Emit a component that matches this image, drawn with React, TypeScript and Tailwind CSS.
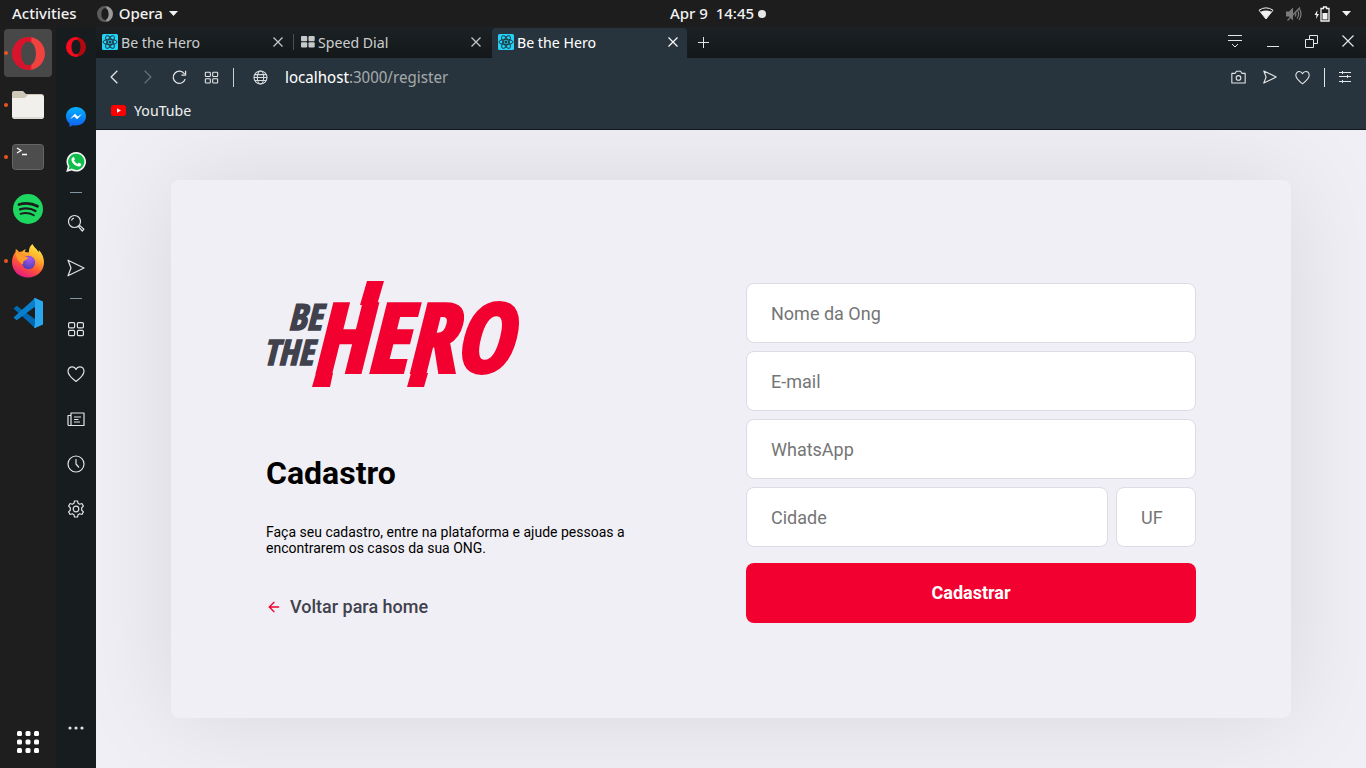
import type { ReactNode } from "react";
import { FiArrowLeft } from "react-icons/fi";

function OperaRing({ size, from, to, id }: { size: number; from: string; to: string; id: string }) {
  return (
    <svg width={size} height={size} viewBox="0 0 32 32" aria-hidden="true">
      <defs>
        <linearGradient id={id} x1="0" y1="0" x2="1" y2="0">
          <stop offset="0" stopColor={from} />
          <stop offset="0.55" stopColor={from} />
          <stop offset="0.62" stopColor={to} />
          <stop offset="1" stopColor={to} />
        </linearGradient>
      </defs>
      <path
        fillRule="evenodd"
        fill={`url(#${id})`}
        d="M16 0a16 16 0 1 0 0 32a16 16 0 1 0 0-32zM16 4.500c4.600 0 7.200 5 7.200 11.500s-2.600 11.500-7.200 11.500s-7.200-5-7.200-11.500s2.600-11.500 7.200-11.500z"
      />
    </svg>
  );
}

function FolderIcon() {
  return (
    <svg width="34" height="32" viewBox="0 0 34 32" aria-hidden="true">
      <path d="M1 4a2 2 0 0 1 2-2h9l3 3h15a3 3 0 0 1 3 3v5H1z" fill="#cfc8b8" />
      <path d="M1 9h13l3-3h13a3 3 0 0 1 3 3v18a3 3 0 0 1-3 3H4a3 3 0 0 1-3-3z" fill="#f1f0ec" />
      <path d="M2 28a3 3 0 0 0 2 2h26a3 3 0 0 0 3-2z" fill="#dedbd3" />
    </svg>
  );
}

function TerminalIcon() {
  return (
    <svg width="32" height="28" viewBox="0 0 32 28" aria-hidden="true">
      <rect x="0.500" y="1.500" width="31" height="25" rx="3" fill="#4d4d4d" stroke="#666" />
      <path d="M5 5l4 2.500l-4 2.500M10 11.500h5" fill="none" stroke="#fff" strokeWidth="1.300" />
    </svg>
  );
}

function SpotifyIcon() {
  return (
    <svg width="30" height="30" viewBox="0 0 30 30" aria-hidden="true">
      <circle cx="15" cy="15" r="15" fill="#1ed760" />
      <g fill="none" stroke="#1b1f1c" strokeLinecap="round">
        <path d="M6 10.500c6-1.800 13-1.300 18.500 1.800" strokeWidth="2.800" />
        <path d="M7 15.300c5-1.500 11-1 15.500 1.700" strokeWidth="2.300" />
        <path d="M7.500 19.800c4.500-1.200 9.500-.800 13.300 1.500" strokeWidth="1.900" />
      </g>
    </svg>
  );
}

function FirefoxIcon() {
  return (
    <svg width="32" height="34" viewBox="0 0 32 34" aria-hidden="true">
      <defs>
        <linearGradient id="ffBody" x1="0.8" y1="0" x2="0.3" y2="1">
          <stop offset="0" stopColor="#fff04a" />
          <stop offset="0.35" stopColor="#ffb02e" />
          <stop offset="0.65" stopColor="#ff5634" />
          <stop offset="1" stopColor="#e31587" />
        </linearGradient>
        <radialGradient id="ffGlobe" cx="0.6" cy="0.25" r="0.8">
          <stop offset="0" stopColor="#a557f2" />
          <stop offset="1" stopColor="#4a3cb0" />
        </radialGradient>
      </defs>
      <path
        d="M20.500 0c1 3 4.500 4.500 6 8.500l.3-2.500c3.500 3.500 5.200 8 5.200 12.500C32 27 25 33.500 16 33.500S0 27 0 18c0-4 1.500-7.500 3.500-10L3.800 5c1.700.8 2.700 2 3.200 3c1-.5 2-.7 3.200-.6c1-1.200 2.300-2 3.600-2.200c-.6 1-.9 1.800-1 2.800l4 .5c0-4 1.500-7 3.700-8.500z"
        fill="url(#ffBody)"
      />
      <circle cx="16.500" cy="18.500" r="6.700" fill="url(#ffGlobe)" />
      <path d="M4 8c3 .2 5.500 1.700 8 4.700c2 .2 4 .2 4.500.8c-.3 1.700-3 2.300-4.500 3.500c-1.200 1-.8 2.500-.8 3.500C7 19 3.500 14 4 8z" fill="#ff9a2b" />
    </svg>
  );
}

function CodeIcon() {
  return (
    <svg width="30" height="30" viewBox="0 0 30 30" aria-hidden="true">
      <path d="M.5 10.500l3.200-2.800L23 22v8l-2-1z" fill="#0069b4" />
      <path d="M.5 19.500l3.200 2.800L23 8V0l-2 1z" fill="#0a80cc" />
      <path d="M22 0l8 3.500v23L22 30l-1-.5l1-3v-23l-1-3z" fill="#29a8f0" />
    </svg>
  );
}

function AppsIcon() {
  return (
    <svg width="22" height="22" viewBox="0 0 22 22" fill="#fff" aria-hidden="true">
      {[0, 8.500, 17].map((x) => [0, 8.500, 17].map((y) => <rect key={`${x}-${y}`} x={x} y={y} width="5" height="5" rx="1.500" />))}
    </svg>
  );
}

function DockButton({ label, running, active, children }: { label: string; running?: boolean; active?: boolean; children: ReactNode }) {
  return (
    <button
      type="button"
      aria-label={label}
      className={`relative flex size-12 items-center justify-center rounded ${active ? "bg-[#484848]" : ""}`}
    >
      {running && <span className="absolute left-0 size-1 rounded-full bg-[#e95420]" />}
      {children}
    </button>
  );
}

function Line({ size = 18, width = 1.2, children }: { size?: number; width?: number; children: ReactNode }) {
  return (
    <svg width={size} height={size} viewBox="0 0 18 18" fill="none" stroke="currentColor" strokeWidth={width} strokeLinejoin="round" aria-hidden="true">
      {children}
    </svg>
  );
}

const heartPath = <path d="M9 16.500C6 14.200 1 10.500 1 6.300C1 3.600 2.900 1.800 5.100 1.800C6.900 1.800 8.300 2.900 9 4.500C9.700 2.900 11.100 1.800 12.900 1.800C15.100 1.800 17 3.600 17 6.300C17 10.500 12 14.200 9 16.500z" />;
const sendPath = <path d="M1 1.200L17 9L1 16.800L4 9z" />;
const gridPath = (
  <>
    <rect x="1.600" y="2.600" width="6" height="5.200" rx="1" />
    <rect x="10.400" y="2.600" width="6" height="5.200" rx="1" />
    <rect x="1.600" y="10.400" width="6" height="5.200" rx="1" />
    <rect x="10.400" y="10.400" width="6" height="5.200" rx="1" />
  </>
);

function MessengerIcon() {
  return (
    <svg width="20" height="20" viewBox="0 0 20 20" aria-hidden="true">
      <defs>
        <linearGradient id="msg" x1="0" y1="0" x2="0" y2="1">
          <stop offset="0" stopColor="#00b2ff" />
          <stop offset="1" stopColor="#1060f0" />
        </linearGradient>
      </defs>
      <path d="M10 0C4.400 0 0 4 0 9.300c0 3 1.300 5.500 3.500 7.200V20l3.300-1.800c1 .3 2 .4 3.200.4c5.600 0 10-4 10-9.300S15.600 0 10 0z" fill="url(#msg)" />
      <path d="M4 12l5-5.200l2.600 2.600L16 7l-5 5.200l-2.600-2.600z" fill="#fff" />
    </svg>
  );
}

function WhatsAppIcon() {
  return (
    <svg width="20" height="20" viewBox="0 0 20 20" aria-hidden="true">
      <path d="M10.200 0a9.800 9.800 0 0 0-8.500 14.600L.2 20l5.500-1.500A9.800 9.800 0 1 0 10.200 0z" fill="#f3f3f3" />
      <path d="M10.200 1.700a8.100 8.100 0 0 0-6.700 12.600l-.9 3.100l3.200-.8A8.100 8.100 0 1 0 10.200 1.700z" fill="#0fbf4a" />
      <path d="M6.800 5.200c.4-.4 1-.4 1.200.1l.8 1.800c.1.300 0 .6-.8 1.500c.8 1.500 2 2.600 3.600 3.300c.8-1 1-1.300 1.400-1.100l1.900.9c.4.200.4.400.2 1.200c-.4 1.100-1.700 1.700-2.800 1.500c-3.500-.7-6.300-3.500-6.800-6.200c-.2-1.200.5-2.300 1.300-3z" fill="#fff" />
    </svg>
  );
}

function SideButton({ label, children }: { label: string; children: ReactNode }) {
  return (
    <button type="button" aria-label={label} className="flex h-[45px] w-10 items-center justify-center text-[#dfe3e5]">
      {children}
    </button>
  );
}

function SideRule() {
  return (
    <div className="flex h-4 items-center">
      <span className="h-px w-3 bg-[#8195a3]" />
    </div>
  );
}

function ReactFavicon() {
  return (
    <svg width="16" height="16" viewBox="0 0 16 16" aria-hidden="true">
      <rect width="16" height="16" rx="1.500" fill="#22d3f7" />
      <g fill="none" stroke="#1f3b47" strokeWidth="1">
        <ellipse cx="8" cy="8" rx="7" ry="2.700" />
        <ellipse cx="8" cy="8" rx="7" ry="2.700" transform="rotate(60 8 8)" />
        <ellipse cx="8" cy="8" rx="7" ry="2.700" transform="rotate(120 8 8)" />
      </g>
      <circle cx="8" cy="8" r="1.500" fill="#1f3b47" />
    </svg>
  );
}

function SpeedDialIcon() {
  return (
    <svg width="14" height="12" viewBox="0 0 14 12" fill="#c6c9ca" aria-hidden="true">
      <rect width="6.200" height="5.200" rx="1" />
      <rect x="7.500" width="6.200" height="5.200" rx="1" />
      <rect y="6.300" width="6.200" height="5.200" rx="1" />
      <rect x="7.500" y="6.300" width="6.200" height="5.200" rx="1" />
    </svg>
  );
}

function Tab({ title, icon, active, divided }: { title: string; icon: ReactNode; active?: boolean; divided?: boolean }) {
  return (
    <div
      role="tab"
      aria-selected={!!active}
      className={`relative flex h-full items-center pb-0.5 pl-1.5 text-[15px] ${active ? "w-[195px] rounded-t bg-[#28343d] pr-1.5 text-white" : "w-[198px] pr-2 text-[#c9cbcc]"}`}
    >
      <span className="mr-[3px] flex shrink-0 items-center">{icon}</span>
      <span className="flex-1 truncate">{title}</span>
      <button type="button" aria-label={`Close ${title}`} className="flex size-4 items-center justify-center">
        <svg width="10" height="10" viewBox="0 0 10 10" stroke="currentColor" strokeWidth="1.200" aria-hidden="true">
          <path d="M.5.5l9 9M9.500.5l-9 9" />
        </svg>
      </button>
      {divided && <span className="absolute right-0 h-4 w-px bg-[#4a4f52]" />}
    </div>
  );
}

function ToolButton({ label, dim, children }: { label: string; dim?: boolean; children: ReactNode }) {
  return (
    <button type="button" aria-label={label} className={`flex h-8 w-8 items-center justify-center ${dim ? "text-[#65717a]" : "text-[#e3e6e8]"}`}>
      {children}
    </button>
  );
}

function HeroLogo() {
  return (
    <svg width="250" height="106" viewBox="0 0 250 106" className="overflow-visible" role="img" aria-label="Be The Hero">
      <g fontFamily='"Open Sans Condensed", "Open Sans", "Liberation Sans", sans-serif' fontWeight="700" fontStyle="italic">
        <g fill="#41414d" stroke="#41414d" strokeWidth="1.500">
          <text x="22" y="49" fontSize="36">BE</text>
          <text x="-3" y="84" fontSize="35">THE</text>
        </g>
        <text x="46" y="91" fontSize="95" fill="#f20030" stroke="#f20030" strokeWidth="4">HERO</text>
        <path d="M94 24L101 0H118L111 24zM50 92H67L64 106H46zM145 92H162L158 106H141z" fill="#f20030" />
      </g>
    </svg>
  );
}

const fieldClass =
  "h-[60px] w-full min-w-0 rounded-lg border border-[#dcdce6] bg-white px-6 text-lg text-[#333] outline-none placeholder:text-[#757575]";

function RegisterPage() {
  return (
    <main className="flex flex-1 items-center justify-center overflow-hidden bg-[#f0eff5] font-['Roboto',sans-serif]">
      <div className="flex w-full max-w-[1120px] items-start justify-between rounded-lg bg-[#f0eff5] px-[95px] pt-[101px] pb-[95px] shadow-[0_0_100px_rgba(0,0,0,0.1)]">
        <section className="w-full max-w-[380px]">
          <HeroLogo />
          <h1 className="mt-[67px] mb-8 text-[32px] leading-[38px] font-bold text-black">Cadastro</h1>
          <p className="text-sm leading-4 text-black">Faça seu cadastro, entre na plataforma e ajude pessoas a encontrarem os casos da sua ONG.</p>
          <a href="#home" className="mt-10 flex items-center gap-2 text-lg leading-[22px] font-medium text-[#41414d]">
            <FiArrowLeft size={16} color="#f20030" />
            Voltar para home
          </a>
        </section>
        <form className="flex w-full max-w-[450px] flex-col gap-2 pt-0.5" onSubmit={(e) => e.preventDefault()}>
          <input aria-label="Nome da Ong" placeholder="Nome da Ong" className={fieldClass} />
          <input aria-label="E-mail" type="email" placeholder="E-mail" className={fieldClass} />
          <input aria-label="WhatsApp" placeholder="WhatsApp" className={fieldClass} />
          <div className="flex gap-2">
            <input aria-label="Cidade" placeholder="Cidade" className={fieldClass} />
            <div className="w-20 shrink-0">
              <input aria-label="UF" placeholder="UF" className={fieldClass} />
            </div>
          </div>
          <button type="submit" className="mt-2 h-[60px] rounded-lg bg-[#f20030] text-lg font-bold text-white">
            Cadastrar
          </button>
        </form>
      </div>
    </main>
  );
}

function SystemBar() {
  return (
    <header className="grid h-[27px] shrink-0 grid-cols-3 items-center bg-[#1d1d1d] px-3 text-[15px] font-medium text-[#f2f2f2]">
      <div className="flex items-center gap-5">
        <button type="button">Activities</button>
        <button type="button" className="flex items-center gap-1.5">
          <OperaRing size={16} from="#5c5c5c" to="#9a9a9a" id="ringTop" />
          Opera
          <svg width="9" height="5" viewBox="0 0 9 5" fill="#f2f2f2" aria-hidden="true"><path d="M0 0h9l-4.500 5z" /></svg>
        </button>
      </div>
      <button type="button" className="flex items-center justify-center gap-1 pl-[70px] whitespace-pre">
        Apr 9  14:45
        <span className="size-2 rounded-full bg-[#e6e6e6]" />
      </button>
      <div className="flex items-center justify-end gap-3 pr-[3px]">
        <svg width="16" height="13" viewBox="0 0 16 13" aria-hidden="true">
          <path d="M1 3.200Q8-1.500 15 3.200L8 12z" fill="none" stroke="#f2f2f2" strokeWidth="1" />
          <path d="M2.500 4.800Q8 2.300 13.500 4.800L8 12z" fill="#f2f2f2" />
        </svg>
        <svg width="16" height="14" viewBox="0 0 16 14" aria-hidden="true">
          <path d="M0 4.500h3l4-4v13l-4-4H0z" fill="#7b7b7b" />
          <path d="M9 4.500q1.800 2.500 0 5M11 2.500q3.300 4.500 0 9M13 1q4 6 0 12M1.500 13.500L14 .5" fill="none" stroke="#7b7b7b" strokeWidth="1.200" />
        </svg>
        <svg width="16" height="16" viewBox="0 0 16 16" aria-hidden="true">
          <path d="M3.500 4L.5 9h2l-.5 4l3-5H3z" fill="#f2f2f2" />
          <path d="M7 2.500h2.500v-1.500h3v1.500H15V15H7z" fill="none" stroke="#f2f2f2" strokeWidth="1.300" />
          <rect x="8.500" y="7" width="5" height="6.500" fill="#f2f2f2" />
        </svg>
        <svg width="9" height="5" viewBox="0 0 9 5" fill="#f2f2f2" aria-hidden="true"><path d="M0 0h9l-4.500 5z" /></svg>
      </div>
    </header>
  );
}

function TabStrip() {
  return (
    <div className="flex h-[31px] shrink-0 items-center bg-linear-to-b from-[#1b2124] to-[#14181b] pt-px" role="tablist">
      <Tab title="Be the Hero" icon={<ReactFavicon />} divided />
      <Tab title="Speed Dial" icon={<span className="pl-px"><SpeedDialIcon /></span>} />
      <Tab title="Be the Hero" icon={<ReactFavicon />} active />
      <button type="button" aria-label="New tab" className="flex size-8 items-center justify-center pb-0.5 text-[#e3e6e8]">
        <svg width="11" height="11" viewBox="0 0 11 11" stroke="currentColor" aria-hidden="true"><path d="M5.500 0v11M0 5.500h11" /></svg>
      </button>
      <div className="ml-auto flex items-center pb-1 text-[#e3e6e8]">
        <button type="button" aria-label="Tab menu" className="flex h-7 w-[38px] items-center justify-center">
          <svg width="14" height="13" viewBox="0 0 14 13" fill="none" stroke="currentColor" aria-hidden="true"><path d="M0 .5h14M0 5.500h14M4 9l3 3l3-3" /></svg>
        </button>
        <button type="button" aria-label="Minimize" className="flex h-7 w-[38px] items-center justify-center">
          <svg width="12" height="12" viewBox="0 0 12 12" stroke="currentColor" aria-hidden="true"><path d="M0 11.500h12" /></svg>
        </button>
        <button type="button" aria-label="Restore" className="flex h-7 w-[38px] items-center justify-center">
          <svg width="13" height="13" viewBox="0 0 13 13" fill="none" stroke="currentColor" aria-hidden="true"><path d="M.5 4.500h8v8h-8zM4.500 4.500v-4h8v8h-4" /></svg>
        </button>
        <button type="button" aria-label="Close window" className="flex h-7 w-9 items-center justify-center">
          <svg width="12" height="12" viewBox="0 0 12 12" stroke="currentColor" strokeWidth="1.200" aria-hidden="true"><path d="M.5.5l11 11M11.500.5l-11 11" /></svg>
        </button>
      </div>
    </div>
  );
}

function AddressBar() {
  return (
    <div className="flex h-[38px] shrink-0 items-center pr-[5px] pl-[3px]">
      <ToolButton label="Back"><Line size={14} width={1.6}><path d="M12 1L4 9l8 8" /></Line></ToolButton>
      <ToolButton label="Forward" dim><Line size={14} width={1.6}><path d="M6 1l8 8l-8 8" /></Line></ToolButton>
      <ToolButton label="Reload">
        <Line size={15} width={1.5}><path d="M15.800 11A7.300 7.300 0 1 1 15 4.800M16.300 1v5h-5" /></Line>
      </ToolButton>
      <ToolButton label="Speed Dial"><Line size={15} width={1.3}>{gridPath}</Line></ToolButton>
      <span className="mx-1.5 h-[19px] w-px bg-[#c9ced1]" />
      <span className="flex w-10 items-center justify-center text-[#d5dadd]">
        <Line size={15} width={1.3}>
          <circle cx="9" cy="9" r="7.800" />
          <ellipse cx="9" cy="9" rx="3.800" ry="7.800" />
          <path d="M2 5.500h14M2 12.500h14M1 9h16" />
        </Line>
      </span>
      <div className="ml-[5px] flex-1 text-base leading-6 text-[#a3a8ab]">
        <span className="text-white">localhost</span>:3000/register
      </div>
      <ToolButton label="Snapshot">
        <Line size={15} width={1.3}><path d="M1 4h4l1.500-2.500h5L13 4h4v11.500H1z" /><circle cx="9" cy="9.500" r="2.800" /></Line>
      </ToolButton>
      <ToolButton label="Send to device"><Line size={14} width={1.4}>{sendPath}</Line></ToolButton>
      <ToolButton label="Add to favourites"><Line size={15} width={1.3}>{heartPath}</Line></ToolButton>
      <span className="ml-1.5 h-[19px] w-px bg-[#e3e6e8]" />
      <span className="ml-1">
        <ToolButton label="Easy setup">
          <svg width="12" height="12" viewBox="0 0 12 12" stroke="currentColor" aria-hidden="true"><path d="M0 1.500h12M0 5.500h12M0 10.500h12M3.500 0v3M8.500 4v3M3.500 9v3" /></svg>
        </ToolButton>
      </span>
    </div>
  );
}

export default function App() {
  return (
    <div className="flex h-screen flex-col overflow-hidden bg-[#1d1d1d] font-['Noto_Sans','Open_Sans',sans-serif]">
      <SystemBar />
      <div className="flex min-h-0 flex-1">
        <nav aria-label="Dock" className="flex w-14 shrink-0 flex-col items-center gap-1 bg-[#1e1e1e] pt-0.5 pb-0.5">
          <DockButton label="Opera" running active><OperaRing size={33} from="#d8142c" to="#f2423f" id="ringDock" /></DockButton>
          <DockButton label="Files" running><FolderIcon /></DockButton>
          <DockButton label="Terminal" running><TerminalIcon /></DockButton>
          <DockButton label="Spotify"><SpotifyIcon /></DockButton>
          <DockButton label="Firefox" running><FirefoxIcon /></DockButton>
          <DockButton label="Visual Studio Code"><CodeIcon /></DockButton>
          <div className="mt-auto"><DockButton label="Show applications"><AppsIcon /></DockButton></div>
        </nav>
        <nav aria-label="Sidebar" className="flex w-10 shrink-0 flex-col items-center bg-[#171c1f] pb-[18px]">
          <button type="button" aria-label="Opera menu" className="mb-[27px] flex h-10 w-10 items-center justify-center">
            <OperaRing size={20} from="#fa0a1e" to="#b5070f" id="ringSide" />
          </button>
          <SideButton label="Messenger"><MessengerIcon /></SideButton>
          <SideButton label="WhatsApp"><WhatsAppIcon /></SideButton>
          <SideRule />
          <SideButton label="Search">
            <Line><circle cx="7.500" cy="7.500" r="6" /><path d="M4.500 6.500a3.200 3.200 0 0 1 2.500-2.300" /><path d="M11.700 12.800l1.200-1.200l4 3.600l-1.600 1.800z" /></Line>
          </SideButton>
          <SideButton label="My Flow"><Line>{sendPath}</Line></SideButton>
          <SideRule />
          <SideButton label="Speed Dial"><Line>{gridPath}</Line></SideButton>
          <SideButton label="Bookmarks"><Line>{heartPath}</Line></SideButton>
          <SideButton label="News">
            <Line><path d="M4 15.500V3h13v12.500H2a1 1 0 0 1-1-1V5.500h3" /><path d="M7 7h7M7 9.500h4.500M7 12h6" /></Line>
          </SideButton>
          <SideButton label="History"><Line><circle cx="9" cy="9" r="8" /><path d="M9 4v5l3 3.500" /></Line></SideButton>
          <SideButton label="Settings">
            <Line>
              <path d="M7.500 1h3l.5 2.200l1.700 1l2.200-.7l1.500 2.600l-1.700 1.600v2.600l1.700 1.600l-1.500 2.600l-2.200-.7l-1.700 1l-.5 2.200h-3L7 14.800l-1.700-1l-2.200.7l-1.500-2.600l1.700-1.600V7.700L1.600 6.100l1.500-2.600l2.200.7l1.700-1z" />
              <circle cx="9" cy="9" r="2.800" />
            </Line>
          </SideButton>
          <div className="mt-auto">
            <SideButton label="More">
              <svg width="16" height="4" viewBox="0 0 16 4" fill="currentColor" aria-hidden="true"><circle cx="2" cy="2" r="1.600" /><circle cx="8" cy="2" r="1.600" /><circle cx="14" cy="2" r="1.600" /></svg>
            </SideButton>
          </div>
        </nav>
        <div className="flex min-w-0 flex-1 flex-col bg-[#28343d] font-['Noto_Sans_Display','Noto_Sans',sans-serif]">
          <TabStrip />
          <AddressBar />
          <div className="flex h-[34px] shrink-0 items-start border-b border-[#12171b] pt-[3px] pl-[15px]">
            <a href="#youtube" className="flex items-center gap-2 text-[15px] leading-[22px] text-[#eceeef]">
              <svg width="15" height="11" viewBox="0 0 15 11" aria-hidden="true"><rect width="15" height="11" rx="2.500" fill="#f00" /><path d="M6 3.200l4 2.300l-4 2.300z" fill="#fff" /></svg>
              YouTube
            </a>
          </div>
          <RegisterPage />
        </div>
      </div>
    </div>
  );
}
